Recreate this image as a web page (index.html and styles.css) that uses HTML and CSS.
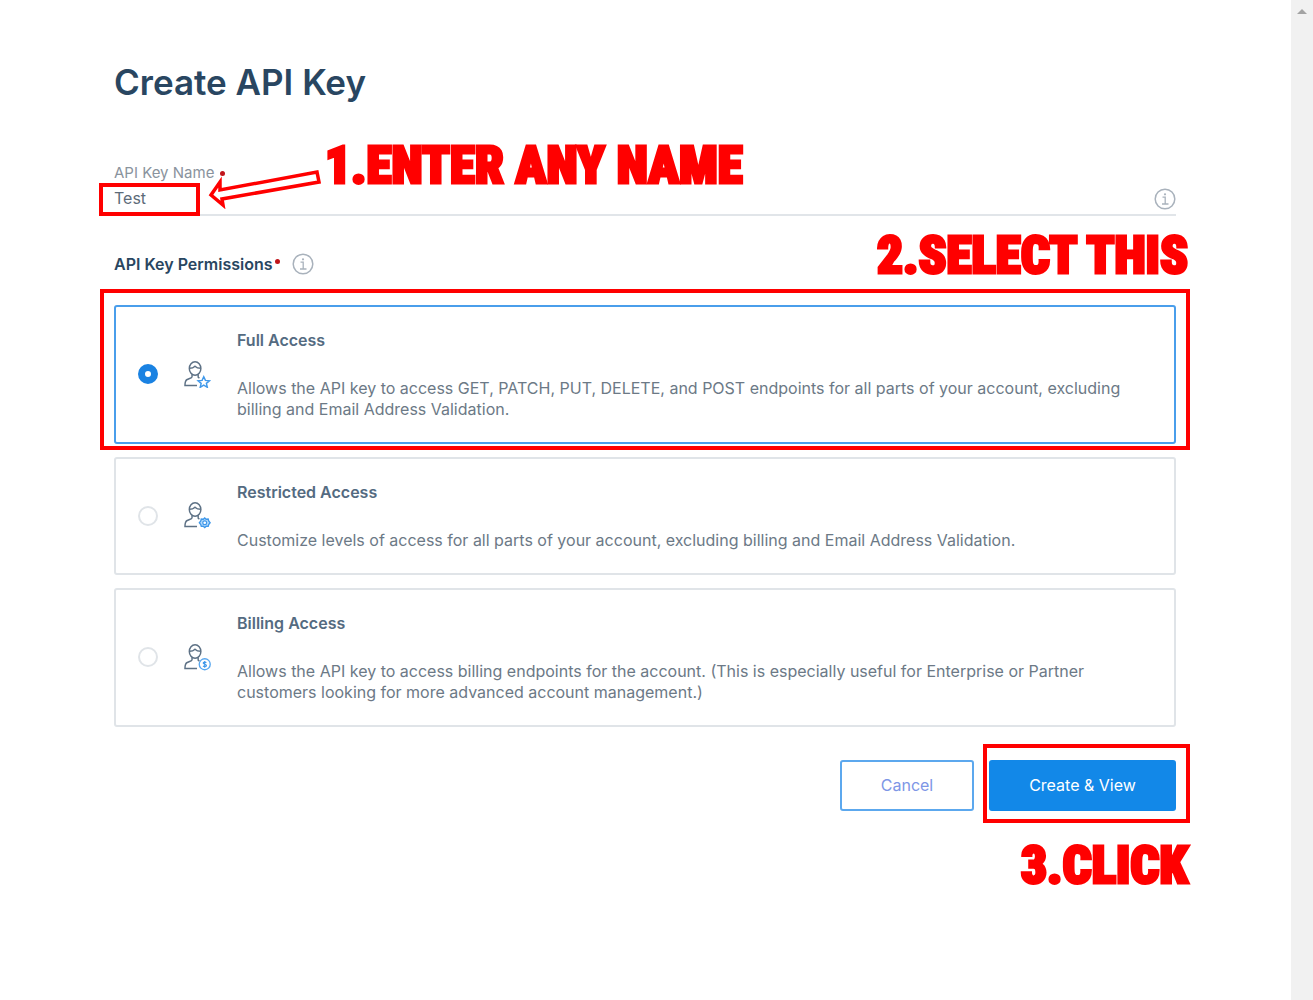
FILE: index.html
```html
<!DOCTYPE html>
<html lang="en">
<head>
<meta charset="utf-8">
<meta name="viewport" content="width=device-width, initial-scale=1">
<title>Create API Key</title>
<link rel="stylesheet" href="styles.css">
</head>
<body>
<svg class="defs" aria-hidden="true">
  <symbol id="person" viewBox="0 0 28 28">
    <g fill="none" stroke="#5d7185" stroke-width="1.5">
      <ellipse cx="11.5" cy="7.8" rx="6" ry="7"/>
      <path d="M5.8 7.6c2.2 0 4-.5 5.6-2.2 1.6 1.700 3.600 2.200 5.900 2.200M8.300 13.800v2.800c0 1-3 1.700-5 2.600C1.500 20 1 21.500 1 25.500h12.500M14.700 13.800v3l1.300 1"/>
    </g>
  </symbol>
  <symbol id="info" viewBox="0 0 22 22">
    <g fill="none" stroke="#a9b2bc" stroke-width="1.5">
      <circle cx="11" cy="11" r="9.800"/>
      <path stroke-width="1.300" d="M8.500 9.200h2.700v6.600M8 16h6.500"/>
    </g>
    <circle cx="11" cy="6.300" r="1.100" fill="#a9b2bc"/>
  </symbol>
</svg>
<main class="page">
  <h1 class="title">Create API Key</h1>
  <form>
    <div class="field">
      <label class="field-label" for="key-name">API Key Name <span class="required"></span></label>
      <div class="field-row">
        <input class="field-input" id="key-name" type="text" value="Test">
        <svg class="info"><use href="#info"/></svg>
      </div>
      <span class="mark mark-input"></span>
      <svg class="arrow" viewBox="0 0 114 40" aria-hidden="true"><path d="M3 26L12 13V21L109 3L111 13L14 30L15 36Z" fill="none" stroke="#f00" stroke-width="3.500"/></svg>
      <span class="note note-enter">1.ENTER ANY NAME</span>
    </div>

    <div class="permissions">
      <h2 class="group-label" id="permissions">API Key Permissions<span class="required"></span></h2>
      <svg class="info"><use href="#info"/></svg>
      <span class="note note-select">2.SELECT THIS</span>
    </div>

    <div class="cards" role="radiogroup" aria-labelledby="permissions">
      <label class="card card-selected">
        <input class="radio" type="radio" name="access" checked>
        <svg class="icon" viewBox="0 0 28 28"><use href="#person"/><path d="M20.500 16.300l1.700 3.800 4.200.4-3.200 2.700 1 4.100-3.700-2.200-3.700 2.200 1-4.100-3.200-2.700 4.200-.4z" fill="#fff" stroke="#3f98ea" stroke-width="1.500"/></svg>
        <span class="card-text">
          <strong class="card-title">Full Access</strong>
          <span>Allows the API key to access GET, PATCH, PUT, DELETE, and POST endpoints for all parts of your account, excluding billing and Email Address Validation.</span>
        </span>
        <span class="mark mark-card"></span>
      </label>
      <label class="card">
        <input class="radio" type="radio" name="access">
        <svg class="icon" viewBox="0 0 28 28"><use href="#person"/><path d="M21.500 16.500l1.500 1.400 2.100-.2.500 2 1.500 1.800-1.500 1.800-.5 2-2.100-.2-1.500 1.400-1.500-1.400-2.100.2-.5-2-1.500-1.800 1.500-1.800.5-2 2.100.2z" fill="#b5dafb" stroke="#3f98ea" stroke-width="1.400"/><circle cx="21.500" cy="21.500" r="2" fill="#fff" stroke="#3f98ea" stroke-width="1.200"/></svg>
        <span class="card-text">
          <strong class="card-title">Restricted Access</strong>
          <span>Customize levels of access for all parts of your account, excluding billing and Email Address Validation.</span>
        </span>
      </label>
      <label class="card">
        <input class="radio" type="radio" name="access">
        <svg class="icon" viewBox="0 0 28 28"><use href="#person"/><circle cx="21.500" cy="21" r="5.700" fill="#fff" stroke="#58a7ef" stroke-width="1.400"/><path d="M23.200 19.300c-.5-.6-3.300-.9-3.300.5 0 1.500 3.400.8 3.400 2.400 0 1.400-2.900 1.200-3.500.4M21.500 17.500v7" fill="none" stroke="#3f98ea" stroke-width="1.200"/></svg>
        <span class="card-text">
          <strong class="card-title">Billing Access</strong>
          <span>Allows the API key to access billing endpoints for the account. (This is especially useful for Enterprise or Partner customers looking for more advanced account management.)</span>
        </span>
      </label>
    </div>

    <div class="actions">
      <button class="button button-plain" type="button">Cancel</button>
      <div class="submit">
        <button class="button button-primary" type="submit">Create &amp; View</button>
        <span class="mark mark-submit"></span>
        <span class="note note-click">3.CLICK</span>
      </div>
    </div>
  </form>
</main>
<div class="scrollbar" aria-hidden="true"><span class="scroll-up"></span></div>
</body>
</html>
```
FILE: styles.css
```css
* { box-sizing: border-box; }

body {
  margin: 0;
  min-height: 100vh;
  display: flex;
  background: #fff;
  color: #6c7986;
  font: 16px/21px Inter, "Liberation Sans", sans-serif;
}

.defs { position: absolute; width: 0; height: 0; }

.page {
  flex: 1;
  min-width: 0;
  padding: 56px 115px 64px 114px;
}

.title {
  margin: 0;
  color: #294661;
  font-size: 35px;
  font-weight: 600;
  line-height: 52px;
}

.field { position: relative; margin-top: 55px; }

.field-label {
  display: flex;
  align-items: center;
  gap: 6px;
  color: #8a939d;
  font-size: 15px;
  line-height: 20px;
}

.required {
  width: 5px;
  height: 5px;
  border-radius: 50%;
  background: #c0151b;
}

.field-row {
  display: flex;
  align-items: center;
  height: 33px;
  border-bottom: 2px solid #e1e5e9;
}

.field-input {
  flex: 1;
  min-width: 0;
  padding: 0;
  border: 0;
  outline: 0;
  background: none;
  color: #5c6b79;
  font: inherit;
}

.info { width: 22px; height: 22px; flex: none; }

.permissions {
  position: relative;
  display: flex;
  align-items: center;
  gap: 12px;
  height: 24px;
  margin-top: 36px;
}

.group-label {
  display: flex;
  gap: 2px;
  margin: 0;
  color: #294661;
  font-size: 16px;
  font-weight: 600;
}

.group-label .required { margin-top: 5px; }

.cards {
  display: grid;
  gap: 13px;
  margin-top: 29px;
}

.card {
  position: relative;
  display: flex;
  align-items: center;
  padding: 23px 22px 22px;
  border: 2px solid #e0e4e8;
  border-radius: 3px;
}

.card-selected { border-color: #4a9eeb; }

.radio {
  appearance: none;
  flex: none;
  width: 20px;
  height: 20px;
  margin: 0 0 2px;
  border: 2px solid #e0e4e8;
  border-radius: 50%;
  background: #fff;
}

.radio:checked { border: 7px solid #1a82e2; }

.icon {
  flex: none;
  width: 27px;
  height: 27px;
  margin: 0 26px 2px;
}

.card-text { display: grid; gap: 27px; }

.card-title { color: #546b81; font-weight: 600; }

.actions {
  display: flex;
  justify-content: flex-end;
  gap: 15px;
  margin-top: 33px;
}

.submit { position: relative; }

.button {
  height: 51px;
  border: 2px solid #5ca8ee;
  border-radius: 3px;
  font: inherit;
}

.button-plain { width: 134px; background: #fff; color: #7d96e6; }

.button-primary {
  width: 187px;
  border-color: #1288e8;
  background: #1288e8;
  color: #fff;
}

/* Tutorial annotations laid over the form */
.mark {
  position: absolute;
  border: 4px solid #f00;
  pointer-events: none;
}

.mark-input { top: 20px; left: -15px; width: 101px; height: 33px; }
.mark-card { inset: -18px -16px -8px; }
.mark-submit { inset: -16px -14px -12px -6px; }

.arrow {
  position: absolute;
  top: 6px;
  left: 94px;
  width: 114px;
  height: 40px;
}

.note {
  position: absolute;
  color: #f00;
  font: 900 51px/56px "Roboto Condensed", Roboto, sans-serif;
  -webkit-text-stroke: 3px #f00;
  white-space: nowrap;
  pointer-events: none;
}

.note-enter { top: -25px; left: 211px; }
.note-select { top: -24px; right: -12px; }
.note-click { top: 78px; right: -12px; }

.scrollbar {
  flex: none;
  width: 22px;
  padding-top: 9px;
  background: #f1f1f1;
}

.scroll-up {
  display: block;
  width: 10px;
  height: 5px;
  margin: 0 auto;
  background: #a3a3a3;
  clip-path: polygon(50% 0, 100% 100%, 0 100%);
}
```
